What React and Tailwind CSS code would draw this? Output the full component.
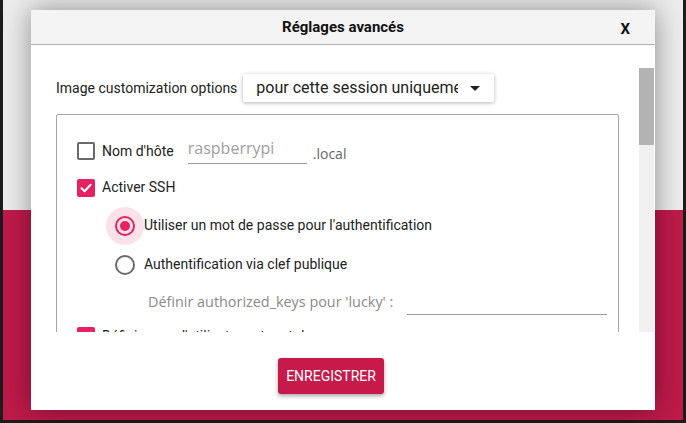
import React from "react";

const roboto = { fontFamily: "Roboto, 'Liberation Sans', sans-serif" };
const openSans = { fontFamily: "'Open Sans', sans-serif" };

function CheckBox({ checked }) {
  if (checked) {
    return (
      <span className="flex h-[18px] w-[18px] shrink-0 items-center justify-center rounded-[2px] bg-[#e5225f]">
        <svg width="14" height="14" viewBox="0 0 14 14" fill="none">
          <path d="M2.5 7.2 L5.6 10.2 L11.6 3.8" stroke="white" strokeWidth="2" strokeLinecap="round" strokeLinejoin="round" />
        </svg>
      </span>
    );
  }
  return <span className="block h-[18px] w-[18px] shrink-0 rounded-[2px] border-2 border-[#6a6a6a]" />;
}

function Radio({ checked }) {
  return (
    <span className="relative flex h-[20px] w-[20px] shrink-0 items-center justify-center">
      {checked && <span className="absolute left-[-9px] top-[-9px] h-[38px] w-[38px] rounded-full bg-[#fbe2ea]" />}
      <span
        className={
          "relative flex h-[20px] w-[20px] items-center justify-center rounded-full border-2 " +
          (checked ? "border-[#e5225f]" : "border-[#6a6a6a]")
        }
      >
        {checked && <span className="h-[10px] w-[10px] rounded-full bg-[#e5225f]" />}
      </span>
    </span>
  );
}

export default function App() {
  return (
    <div className="h-[423px] w-[686px] overflow-hidden bg-[#1c1c1c] px-[3px] pb-[3px]" style={roboto}>
      <div className="relative flex h-full flex-col">
        <div className="h-[210px] bg-[#ececec]" />
        <div className="flex-1 bg-[#bf1a4a]" />

        {/* dialog */}
        <div className="absolute left-[28px] top-[10px] flex h-[400px] w-[624px] flex-col bg-white shadow-[0_0_26px_rgba(0,0,0,0.4)]">
          <div className="relative flex h-[35px] shrink-0 items-center justify-center border-b border-[#b2b2b2] bg-[#f4f4f4]">
            <span className="text-[15px] font-bold text-[#111]">Réglages avancés</span>
            <span className="absolute right-[25px] top-[8px] text-[15px] font-bold text-[#111]">X</span>
          </div>

          <div className="mt-[23px] flex h-[264px] shrink-0">
            <div className="flex-1 overflow-hidden pl-[25px] pr-[20px]">
              <div className="mt-[6px] flex items-center">
                <span className="text-[14px] text-[#222]">Image customization options</span>
                <div className="ml-[6px] flex h-[28px] w-[251px] items-center rounded-[2px] bg-white pl-[13px] pr-[14px] shadow-[0_1px_4px_rgba(0,0,0,0.3)]">
                  <span className="w-[202px] overflow-hidden whitespace-nowrap text-[16px] text-[#222]">
                    pour cette session uniquement
                  </span>
                  <svg className="ml-auto" width="10" height="5" viewBox="0 0 10 5">
                    <path d="M0 0 H10 L5 5 Z" fill="#222" />
                  </svg>
                </div>
              </div>

              <div className="mt-[12px] h-[260px] rounded-[2px] border border-[#a6a6a6] pt-[18px]">
                <div className="flex h-[36px] items-center pl-[20px]">
                  <CheckBox />
                  <span className="ml-[7px] text-[14px] text-[#222]">Nom d'hôte</span>
                  <div
                    className="ml-[14px] mt-[-2px] flex h-[28px] w-[119px] items-center border-b border-[#9a9a9a] pb-[3px] text-[16px] text-[#a0a0a0]"
                    style={openSans}
                  >
                    raspberrypi
                  </div>
                  <span className="ml-[6px] mt-[4px] text-[14px] text-[#666]" style={openSans}>
                    .local
                  </span>
                </div>

                <div className="flex h-[37px] items-center pl-[20px]">
                  <CheckBox checked />
                  <span className="ml-[7px] text-[14px] text-[#222]">Activer SSH</span>
                </div>

                <div className="flex h-[39px] items-center pl-[58px]">
                  <Radio checked />
                  <span className="relative ml-[9px] text-[14px] text-[#222]">Utiliser un mot de passe pour l'authentification</span>
                </div>

                <div className="flex h-[39px] items-center pl-[58px]">
                  <Radio />
                  <span className="ml-[9px] text-[14px] text-[#222]">Authentification via clef publique</span>
                </div>

                <div className="flex h-[35px] items-center pl-[91px]">
                  <span className="text-[14.4px] text-[#8a8a8a]" style={openSans}>
                    Définir authorized_keys pour 'lucky' :
                  </span>
                  <div className="ml-auto mr-[11px] mt-[25px] h-px w-[200px] bg-[#9a9a9a]" />
                </div>

                <div className="flex h-[34px] items-center pl-[20px]">
                  <CheckBox checked />
                  <span className="ml-[7px] text-[14px] text-[#222]">Définir nom d'utilisateur et mot de passe</span>
                </div>
              </div>
            </div>

            <div className="mr-px flex w-[15px] flex-col bg-[#f0f0f0]">
              <div className="h-[77px] bg-[#b3b3b3]" />
            </div>
          </div>

          <div className="flex flex-1 justify-center pr-[24px] pt-[26px]">
            <button className="h-[36px] w-[106px] rounded-[3px] bg-[#c51a4a] text-[14px] text-white shadow-[0_2px_4px_rgba(0,0,0,0.35)]">
              ENREGISTRER
            </button>
          </div>
        </div>
      </div>
    </div>
  );
}
